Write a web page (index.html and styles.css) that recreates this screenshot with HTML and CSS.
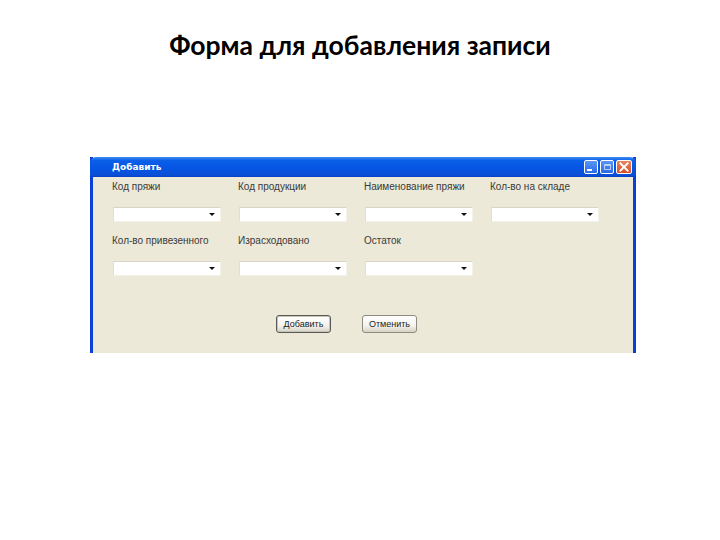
FILE: index.html
```html
<!DOCTYPE html>
<html lang="ru">
<head>
<meta charset="utf-8">
<title>Форма для добавления записи</title>
<link rel="stylesheet" href="styles.css">
</head>
<body>
<h1 class="heading">Форма для добавления записи</h1>
<div class="window">
  <div class="titlebar">
    <span class="title">Добавить</span>
    <div class="controls">
      <span class="ctl ctl-min"><span class="min-bar"></span></span>
      <span class="ctl ctl-max"><span class="max-box"></span></span>
      <span class="ctl ctl-close">
        <svg viewBox="0 0 16 16" width="12" height="12"><path d="M3 3 L13 13 M13 3 L3 13" stroke="#fff" stroke-width="2.4" stroke-linecap="round"/></svg>
      </span>
    </div>
  </div>
  <div class="body">
    <div class="grid">
      <div class="field"><span class="label">Код пряжи</span><span class="combo"><span class="arrow"></span></span></div>
      <div class="field"><span class="label">Код продукции</span><span class="combo"><span class="arrow"></span></span></div>
      <div class="field"><span class="label">Наименование пряжи</span><span class="combo"><span class="arrow"></span></span></div>
      <div class="field"><span class="label">Кол-во на складе</span><span class="combo"><span class="arrow"></span></span></div>
      <div class="field"><span class="label">Кол-во привезенного</span><span class="combo"><span class="arrow"></span></span></div>
      <div class="field"><span class="label">Израсходовано</span><span class="combo"><span class="arrow"></span></span></div>
      <div class="field"><span class="label">Остаток</span><span class="combo"><span class="arrow"></span></span></div>
    </div>
    <div class="buttons">
      <span class="btn btn-default">Добавить</span>
      <span class="btn">Отменить</span>
    </div>
  </div>
</div>
</body>
</html>
```

FILE: styles.css
```css
html, body {
  margin: 0;
  padding: 0;
  background: #ffffff;
}

.heading {
  margin: 30px 0 0 0;
  height: 30px;
  line-height: 30px;
  text-align: center;
  font-family: "Lato", "Open Sans", sans-serif;
  font-weight: 700;
  font-size: 26.5px;
  color: #000;
}

.window {
  margin: 97px 0 0 90px;
  width: 546px;
  box-sizing: border-box;
  border-left: 3px solid #0a3fd8;
  border-right: 3px solid #0a3fd8;
  background: #ece9d8;
}

.titlebar {
  margin: 0 -3px;
  height: 20px;
  border-radius: 6px 6px 0 0;
  background: linear-gradient(to bottom, #3d8cf7 0%, #0a5fe8 18%, #0554e2 60%, #0a4fd6 90%, #0740c4 100%);
  display: flex;
  align-items: center;
  justify-content: space-between;
  padding: 0 4px 0 22px;
}

.title {
  font-family: "DejaVu Sans", sans-serif;
  font-weight: 700;
  font-size: 9px;
  color: #ffffff;
}

.controls {
  display: flex;
  gap: 2px;
}

.ctl {
  width: 14px;
  height: 14px;
  border: 1px solid #ffffff;
  border-radius: 2px;
  box-sizing: border-box;
  display: flex;
  align-items: center;
  justify-content: center;
  background: linear-gradient(to bottom, #5a96f5, #2a6ae8);
}

.ctl-close {
  width: 16px;
  background: linear-gradient(to bottom, #e88660, #d44f25);
}

.min-bar {
  width: 5px;
  height: 2px;
  background: #fff;
  margin-top: 6px;
  margin-right: 3px;
}

.max-box {
  width: 7px;
  height: 6px;
  border: 1px solid #fff;
  border-top-width: 2px;
  box-sizing: border-box;
  opacity: 0.6;
}

.body {
  padding: 4px 0 20px 19px;
}

.grid {
  display: grid;
  grid-template-columns: repeat(4, 126px);
  row-gap: 13px;
}

.field {
  display: flex;
  flex-direction: column;
}

.label {
  font-family: "Liberation Sans", sans-serif;
  font-size: 10px;
  line-height: 12px;
  color: #3a3a3a;
  white-space: nowrap;
}

.combo {
  margin-top: 14px;
  margin-left: 1px;
  width: 108px;
  height: 15px;
  box-sizing: border-box;
  background: #ffffff;
  border-top: 1px solid #d8d5c6;
  border-left: 1px solid #e2dfd1;
  border-bottom: 1px solid #f3f1e8;
  border-right: 1px solid #f3f1e8;
  display: flex;
  align-items: center;
  justify-content: flex-end;
  padding-right: 5px;
}

.arrow {
  width: 0;
  height: 0;
  border-left: 3px solid transparent;
  border-right: 3px solid transparent;
  border-top: 3px solid #111;
}

.buttons {
  display: flex;
  margin-top: 39px;
  padding-left: 164px;
  gap: 31px;
}

.btn {
  width: 55px;
  height: 18px;
  box-sizing: border-box;
  border: 1px solid #8c8c80;
  border-radius: 3px;
  background: linear-gradient(to bottom, #ffffff 0%, #f4f3ee 60%, #d6d2c2 100%);
  font-family: "Liberation Sans", sans-serif;
  font-size: 9px;
  color: #222;
  display: flex;
  align-items: center;
  justify-content: center;
}

.btn-default {
  border-color: #5a5a5a;
  box-shadow: inset 0 0 0 1px #c8c4b4;
}
```
